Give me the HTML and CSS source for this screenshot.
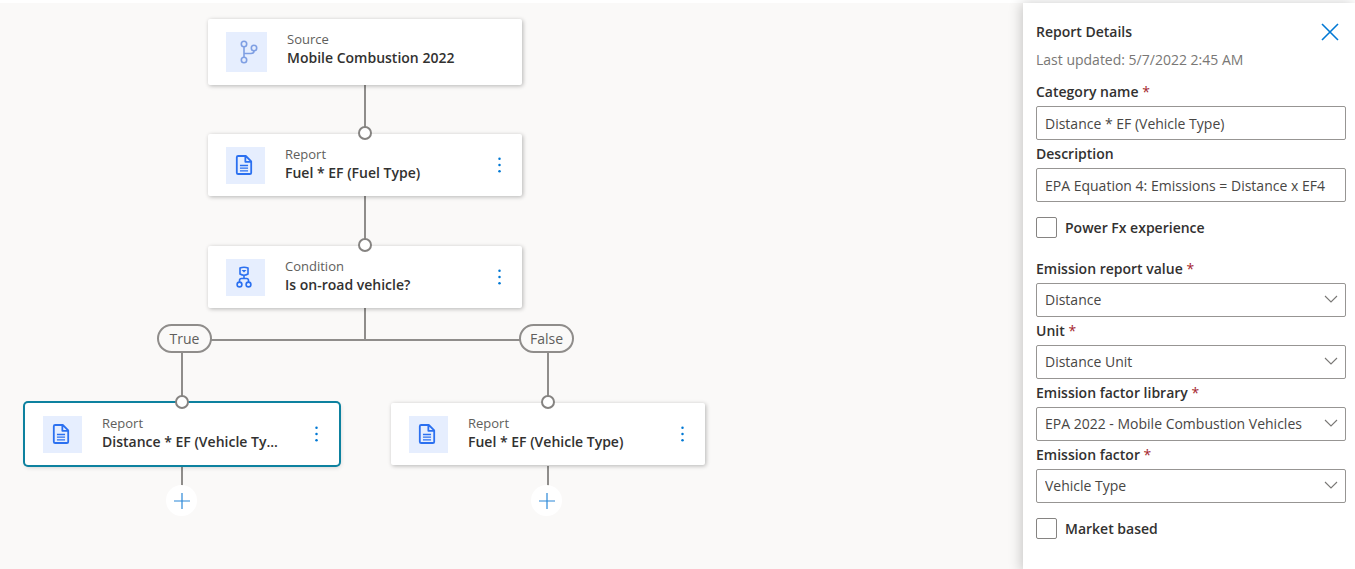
FILE: index.html
```html
<!DOCTYPE html>
<html lang="en">
<head>
<meta charset="utf-8">
<title>Report Details</title>
<link rel="stylesheet" href="styles.css">
</head>
<body>
<svg class="symbols" aria-hidden="true">
  <symbol id="icon-document" viewBox="0 0 20 24">
    <path d="M4 2h8l6 6v12.500q0 1.500-1.500 1.500H3.500q-1.500 0-1.500-1.500V3.500Q2 2 3.500 2zM11.500 2v6.500H18" fill="none" stroke="currentColor" stroke-width="2" stroke-linejoin="round"/>
    <path d="M5.500 12.500h9M5.500 15.500h9M5.500 18.500h9" stroke="currentColor" stroke-width="1.500"/>
  </symbol>
  <symbol id="icon-plus" viewBox="0 0 18 18">
    <path d="M9 1v16M1 9h16" stroke="currentColor" stroke-width="1.200"/>
  </symbol>
  <symbol id="icon-dots" viewBox="0 0 4 16">
    <circle cx="2" cy="3" r="1"/><circle cx="2" cy="8" r="1"/><circle cx="2" cy="13" r="1"/>
  </symbol>
  <symbol id="icon-chevron" viewBox="0 0 14 8">
    <path d="M1 1l6 6 6-6" fill="none" stroke="currentColor" stroke-width="1.100"/>
  </symbol>
</svg>

<main class="canvas">
  <svg class="links" aria-hidden="true">
    <path d="M365 82v48M365 193v48M365 305v31M211 337h309M182 349v48M548 349v48M182 463v20M548 463v20"/>
  </svg>

  <article class="node node-source">
    <span class="tile tile-large">
      <svg class="icon-branch" viewBox="0 0 18 24" fill="none" stroke="currentColor" stroke-width="1.600"><circle cx="4" cy="4" r="2.700"/><circle cx="14" cy="8" r="2.700"/><circle cx="4" cy="20" r="2.700"/><path d="M4 7v10M14 11q0 2.500-3 2.500H4"/></svg>
    </span>
    <div class="caption"><p class="kind">Source</p><h2 class="name">Mobile Combustion 2022</h2></div>
  </article>

  <article class="node node-fuel">
    <span class="tile"><svg class="icon-doc"><use href="#icon-document"/></svg></span>
    <div class="caption"><p class="kind">Report</p><h2 class="name">Fuel * EF (Fuel Type)</h2></div>
    <button class="more" aria-label="More options"><svg><use href="#icon-dots"/></svg></button>
  </article>

  <article class="node node-condition">
    <span class="tile">
      <svg class="icon-condition" viewBox="0 0 16 22" fill="none" stroke="currentColor" stroke-width="1.600"><path d="M4 2q4-1.600 8 0v6q-4 2.600-8 0z" stroke-linejoin="round"/><path d="M5.500 4h5L8 6.500z" fill="currentColor" stroke="none"/><path d="M8 9.500v3M3.500 16v-1.500q0-2 2-2h5q2 0 2 2V16"/><circle cx="3.500" cy="18.500" r="2.400"/><circle cx="12.500" cy="18.500" r="2.400"/></svg>
    </span>
    <div class="caption"><p class="kind">Condition</p><h2 class="name">Is on-road vehicle?</h2></div>
    <button class="more" aria-label="More options"><svg><use href="#icon-dots"/></svg></button>
  </article>

  <article class="node node-true selected">
    <span class="tile"><svg class="icon-doc"><use href="#icon-document"/></svg></span>
    <div class="caption"><p class="kind">Report</p><h2 class="name">Distance * EF (Vehicle Ty...</h2></div>
    <button class="more" aria-label="More options"><svg><use href="#icon-dots"/></svg></button>
  </article>

  <article class="node node-false">
    <span class="tile"><svg class="icon-doc"><use href="#icon-document"/></svg></span>
    <div class="caption"><p class="kind">Report</p><h2 class="name">Fuel * EF (Vehicle Type)</h2></div>
    <button class="more" aria-label="More options"><svg><use href="#icon-dots"/></svg></button>
  </article>

  <span class="branch branch-true">True</span>
  <span class="branch branch-false">False</span>
  <span class="port port-fuel"></span>
  <span class="port port-condition"></span>
  <span class="port port-true"></span>
  <span class="port port-false"></span>
  <button class="add add-true" aria-label="Add step"><svg><use href="#icon-plus"/></svg></button>
  <button class="add add-false" aria-label="Add step"><svg><use href="#icon-plus"/></svg></button>
</main>

<aside class="panel">
  <header class="panel-head">
    <h1 class="title">Report Details</h1>
    <button class="close" aria-label="Close"><svg viewBox="0 0 18 18"><path d="M1 1l16 16M17 1L1 17" stroke="currentColor" stroke-width="1.600"/></svg></button>
  </header>
  <p class="updated">Last updated: 5/7/2022 2:45 AM</p>
  <form class="form">
    <div class="field">
      <label for="category">Category name <span class="required">*</span></label>
      <input class="control" id="category" type="text" value="Distance * EF (Vehicle Type)">
    </div>
    <div class="field">
      <label for="description">Description</label>
      <input class="control" id="description" type="text" value="EPA Equation 4: Emissions = Distance x EF4">
    </div>
    <div class="check"><input id="powerfx" type="checkbox"><label for="powerfx">Power Fx experience</label></div>
    <div class="field">
      <label for="value">Emission report value <span class="required">*</span></label>
      <div class="picker"><select class="control" id="value"><option>Distance</option></select><svg class="chevron"><use href="#icon-chevron"/></svg></div>
    </div>
    <div class="field">
      <label for="unit">Unit <span class="required">*</span></label>
      <div class="picker"><select class="control" id="unit"><option>Distance Unit</option></select><svg class="chevron"><use href="#icon-chevron"/></svg></div>
    </div>
    <div class="field">
      <label for="library">Emission factor library <span class="required">*</span></label>
      <div class="picker"><select class="control" id="library"><option>EPA 2022 - Mobile Combustion Vehicles</option></select><svg class="chevron"><use href="#icon-chevron"/></svg></div>
    </div>
    <div class="field">
      <label for="factor">Emission factor <span class="required">*</span></label>
      <div class="picker"><select class="control" id="factor"><option>Vehicle Type</option></select><svg class="chevron"><use href="#icon-chevron"/></svg></div>
    </div>
    <div class="check"><input id="market" type="checkbox"><label for="market">Market based</label></div>
  </form>
</aside>
</body>
</html>
```

FILE: styles.css
```css
* { box-sizing: border-box; }

body {
  display: flex;
  min-height: 100vh;
  margin: 0;
  padding-top: 3px;
  background: #fff;
  color: #323130;
  font: 14px/20px "Segoe UI", "Open Sans", sans-serif;
}

h1, h2, p { margin: 0; }
button { padding: 0; border: 0; background: none; cursor: pointer; }
.symbols { position: absolute; width: 0; height: 0; }

/* Flow canvas */
.canvas {
  position: relative;
  flex: 1;
  min-width: 0;
  background: #faf9f8;
  overflow: hidden;
}

.links { position: absolute; inset: 0; width: 100%; height: 100%; }
.links path { fill: none; stroke: #8f8d8b; stroke-width: 2; }

.node {
  position: absolute;
  display: flex;
  align-items: center;
  width: 314px;
  height: 62px;
  padding: 0 17px 0 18px;
  gap: 20px;
  background: #fff;
  border-radius: 2px;
  box-shadow: 1px 1px 4px rgba(0, 0, 0, .28);
}
.node-source { left: 208px; top: 16px; height: 66px; }
.node-fuel { left: 208px; top: 131px; }
.node-condition { left: 208px; top: 243px; }
.node-true { left: 25px; top: 400px; }
.node-false { left: 391px; top: 400px; }
.selected {
  border-radius: 3px;
  box-shadow: 0 0 0 2px #0d819f, 1px 2px 5px rgba(0, 0, 0, .2);
}

.tile {
  display: grid;
  place-items: center;
  width: 39px;
  height: 37px;
  padding-right: 3px;
  background: #e6eefe;
  color: #2b70f0;
}
.tile-large { width: 41px; height: 40px; padding: 0 0 0 4px; color: #7f9fe3; }
.icon-doc { width: 18px; height: 22px; }
.icon-branch { width: 18px; height: 24px; }
.icon-condition { width: 16px; height: 22px; }

.caption { flex: 1; min-width: 0; padding-bottom: 2px; white-space: nowrap; }
.node-source .caption { padding-bottom: 6px; }
.kind { color: #605e5c; font-size: 13px; line-height: 18px; }
.name { font-size: 14px; font-weight: 580; line-height: 20px; }

.more { width: 12px; height: 24px; color: #0078d4; }
.more svg { display: block; width: 5px; height: 20px; margin: auto; fill: currentColor; }

.branch {
  position: absolute;
  top: 321px;
  width: 55px;
  height: 29px;
  border: 2px solid #8f8d8b;
  border-radius: 15px;
  background: #faf9f8;
  color: #605e5c;
  line-height: 25px;
  text-align: center;
}
.branch-true { left: 157px; }
.branch-false { left: 519px; }

.port {
  position: absolute;
  width: 14px;
  height: 14px;
  border: 2px solid #858381;
  border-radius: 50%;
  background: #fff;
}
.port-fuel { left: 358px; top: 123px; }
.port-condition { left: 358px; top: 235px; }
.port-true { left: 175px; top: 392px; }
.port-false { left: 541px; top: 392px; }

.add {
  position: absolute;
  top: 482px;
  display: grid;
  place-items: center;
  width: 31px;
  height: 31px;
  border-radius: 50%;
  background: #fff;
  color: #2b88d8;
}
.add svg { width: 18px; height: 18px; }
.add-true { left: 166px; }
.add-false { left: 531px; }

/* Details panel */
.panel {
  position: relative;
  width: 332px;
  padding: 19px 9px 16px 13px;
  background: #fff;
  box-shadow: -2px 0 12px rgba(0, 0, 0, .2);
}
.panel-head { display: flex; justify-content: space-between; align-items: center; height: 20px; }
.title { font-size: 14px; font-weight: 580; line-height: 20px; }
.close { display: grid; width: 18px; height: 18px; margin-right: 7px; color: #0078d4; }
.updated { margin-top: 8px; color: #797775; }

.form { display: grid; gap: 4px; margin-top: 12px; }
.field { display: grid; gap: 4px; }
.field label, .check label { font-weight: 580; }
.required { color: #a4262c; font-weight: 400; }

.control {
  width: 100%;
  height: 34px;
  padding: 0 8px;
  border: 1px solid #979593;
  border-radius: 2px;
  background: #fff;
  color: #484644;
  font: inherit;
  appearance: none;
}
.picker { position: relative; }
.chevron {
  position: absolute;
  right: 8px;
  top: 12px;
  width: 14px;
  height: 8px;
  color: #797775;
  pointer-events: none;
}

.check { display: flex; align-items: center; gap: 8px; margin: 11px 0 17px; }
.check input {
  width: 21px;
  height: 21px;
  margin: 0;
  border: 1px solid #868482;
  border-radius: 2px;
  background: #fff;
  appearance: none;
}
```
